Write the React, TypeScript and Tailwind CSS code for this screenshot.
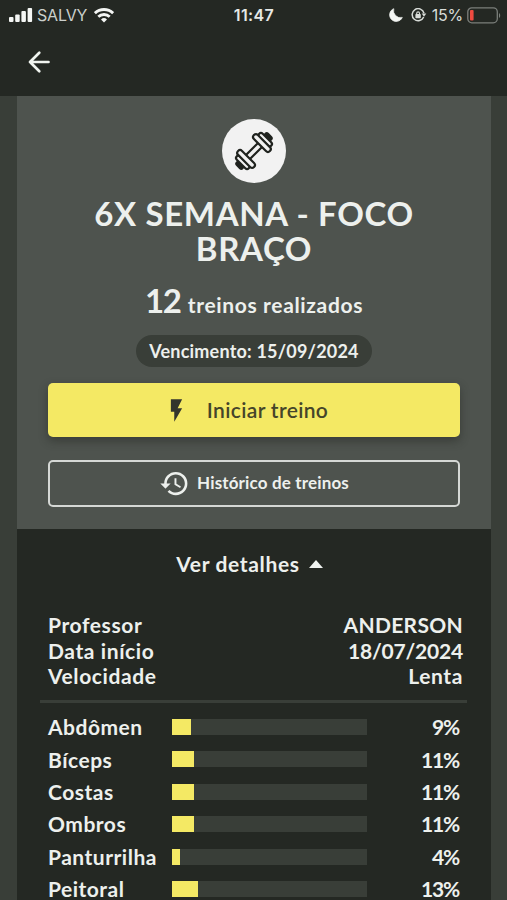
import { MdFlashOn, MdHistory } from "react-icons/md";

const details = [
  { label: "Professor", value: "ANDERSON", tracking: "tracking-[0.3px]" },
  { label: "Data início", value: "18/07/2024", tracking: "tracking-[-0.2px]" },
  { label: "Velocidade", value: "Lenta", tracking: "tracking-[0.6px]" },
];

const muscles = [
  { name: "Abdômen", percent: 9, fill: 9.6 },
  { name: "Bíceps", percent: 11, fill: 11.5 },
  { name: "Costas", percent: 11, fill: 11.5 },
  { name: "Ombros", percent: 11, fill: 11.5 },
  { name: "Panturrilha", percent: 4, fill: 4.1 },
  { name: "Peitoral", percent: 13, fill: 13.4 },
];

function StatusBar() {
  return (
    <div className="grid h-[30px] grid-cols-[1fr_auto_1fr] items-center pl-[9px] pr-[6px] font-['Inter',sans-serif] text-[16px] font-normal leading-none">
      <div className="flex items-center">
        <svg width="24" height="16" viewBox="0 0 24 16" fill="#f4f6f4">
          <rect x="0" y="10" width="4.5" height="5" rx="1" />
          <rect x="6.2" y="7.5" width="4.5" height="7.5" rx="1" />
          <rect x="12.4" y="4" width="4.5" height="11" rx="1" />
          <rect x="18.6" y="1" width="4.5" height="14" rx="1" />
        </svg>
        <span className="ml-[4px] tracking-[-0.2px] text-[#cbd0cc]">SALVY</span>
        <svg className="ml-[7px]" width="20" height="15" viewBox="0 0 20 15" fill="none" stroke="#f4f6f4" strokeWidth="2.8">
          <path d="M0.9 5.2a13 13 0 0 1 18.2 0" />
          <path d="M4.3 8.8a8.2 8.2 0 0 1 11.4 0" />
          <path d="M10 14.6l-3-3.1a4.3 4.3 0 0 1 6 0z" fill="#f4f6f4" stroke="none" />
        </svg>
      </div>
      <span className="-translate-x-px font-semibold tracking-[0.4px] text-[#e6e9e6]">11:47</span>
      <div className="flex items-center justify-end">
        <svg width="14" height="14" viewBox="0 0 14 14" fill="#f4f6f4">
          <path d="M4.8 0.7A6.6 6.6 0 1 0 13.3 9.4A7 7 0 0 1 4.8 0.7z" stroke="#f4f6f4" strokeWidth="0.7" strokeLinejoin="round" />
        </svg>
        <svg className="ml-[8px]" width="16" height="14" viewBox="0 0 16 14" fill="none" stroke="#d8dcd8" strokeWidth="1.5">
          <path d="M12.7 9A6 6 0 1 1 13 5.2" />
          <path d="M10.7 5.6h4.6L13 8.7z" fill="#d8dcd8" stroke="none" />
          <rect x="4.4" y="6.1" width="5.4" height="4.1" rx="0.6" fill="#d8dcd8" stroke="none" />
          <path d="M5.7 6.6V5.3a1.4 1.4 0 0 1 2.8 0v1.3" strokeWidth="1.1" />
        </svg>
        <span className="ml-[5px] tracking-[-0.2px] text-[#d8dcd8]">15%</span>
        <svg className="ml-[4px]" width="34" height="17" viewBox="0 0 34 17" fill="none">
          <rect x="0.8" y="0.8" width="29.5" height="15" rx="4" stroke="#7b7f7b" strokeWidth="1.3" />
          <rect x="3" y="3" width="3.6" height="10.6" rx="1" fill="#ee4b40" />
          <path d="M32 6v5c1.6-.8 1.6-4.2 0-5z" fill="#7b7f7b" />
        </svg>
      </div>
    </div>
  );
}

function Dumbbell() {
  return (
    <svg width="44" height="44" viewBox="-22 -22 44 44" fill="#f2f2f2" stroke="#20231f" strokeWidth="2.2" strokeLinejoin="round">
      <g transform="rotate(-45)">
        <rect x="-10" y="-2.8" width="20" height="5.6" />
        <rect x="-22" y="-4" width="4" height="8" rx="1.8" fill="#20231f" />
        <rect x="18" y="-4" width="4" height="8" rx="1.8" fill="#20231f" />
        <rect x="-18.3" y="-8.5" width="5" height="17" rx="2.5" />
        <rect x="13.3" y="-8.5" width="5" height="17" rx="2.5" />
        <rect x="-14" y="-11.3" width="5.6" height="22.6" rx="2.8" />
        <rect x="8.4" y="-11.3" width="5.6" height="22.6" rx="2.8" />
      </g>
    </svg>
  );
}

export default function App() {
  return (
    <div className="flex h-[900px] w-[507px] flex-col overflow-hidden bg-[#393e38] font-['Lato',sans-serif] font-bold text-[#edf0ed]">
      <header className="h-24 shrink-0 bg-[#242823]">
        <StatusBar />
        <button className="ml-[27px] mt-[20px] block" aria-label="Voltar">
          <svg width="24" height="24" viewBox="0 0 24 24" fill="none" stroke="#f0f4ef" strokeWidth="2.7" strokeLinecap="round" strokeLinejoin="round">
            <path d="M12.3 2.8L3 12l9.3 9.2M3 12h18.5" />
          </svg>
        </button>
      </header>

      <main className="ml-[17px] mr-4 flex min-h-0 flex-1 flex-col bg-[#242823]">
        <section className="flex h-[433px] shrink-0 flex-col items-center bg-[#4e534e] px-[31px] pt-[23px]">
          <div className="flex size-16 items-center justify-center rounded-full bg-[#f2f2f2]">
            <Dumbbell />
          </div>
          <h1 className="mt-[13px] whitespace-nowrap text-center text-[33px] leading-[35px] tracking-[0.65px]">
            6X SEMANA - FOCO
            <br />
            BRAÇO
          </h1>
          <p className="mt-[14px] flex h-[40px] items-baseline gap-[7px] leading-10">
            <span className="text-[33px] tracking-[-1.2px]">12</span>
            <span className="text-[21px] tracking-[0.65px]">treinos realizados</span>
          </p>
          <p className="mt-[15px] flex h-8 w-[236px] shrink-0 items-center justify-center rounded-full bg-[#393e38] text-[18px] tracking-[0.2px]">
            Vencimento: 15/09/2024
          </p>
          <button className="mt-4 flex h-[54px] w-[412px] shrink-0 items-center justify-center rounded-[5px] bg-[#f4e964] pr-[17px] text-[21px] font-semibold tracking-[0.35px] text-[#45452a] shadow-[0_4px_10px_rgba(30,34,28,0.45)]">
            <MdFlashOn className="mr-[17px] size-[27px] text-[#33352c]" />
            Iniciar treino
          </button>
          <button className="mt-[23px] flex h-[47px] w-[412px] shrink-0 items-center justify-center rounded-[5px] border-2 border-[#d5d8d5] pb-px text-[17px] tracking-[0.15px]">
            <MdHistory className="mr-[7px] size-[31px]" />
            Histórico de treinos
          </button>
        </section>

        <button className="flex h-[70px] shrink-0 items-center justify-center gap-[9px] pr-[9px] text-[21px] tracking-[0.65px]">
          Ver detalhes
          <svg width="14" height="8" viewBox="0 0 14 8" fill="#f0f3f0">
            <path d="M7 0l7 8H0z" />
          </svg>
        </button>

        <dl className="ml-[23px] mr-6 shrink-0 border-b-[3px] border-[#393e38] pb-[11px] pl-2 pr-1 pt-[13px] text-[21px]">
          {details.map((item) => (
            <div key={item.label} className="flex h-[25.6px] items-center justify-between">
              <dt className="tracking-[0.6px]">{item.label}</dt>
              <dd className={item.tracking}>{item.value}</dd>
            </div>
          ))}
        </dl>

        <ul className="mt-[8px] pl-[31px] pr-8 text-[21px]">
          {muscles.map((muscle) => (
            <li key={muscle.name} className="flex h-[32.4px] items-center">
              <span className="w-[124px] shrink-0 tracking-[0.5px]">{muscle.name}</span>
              <div className="h-4 w-[195px] bg-[#393e38]">
                <div className="h-full bg-[#f4e964]" style={{ width: `${muscle.fill}%` }} />
              </div>
              <span className="flex-1 text-right tracking-[-1.2px]">{muscle.percent}%</span>
            </li>
          ))}
        </ul>
      </main>
    </div>
  );
}
